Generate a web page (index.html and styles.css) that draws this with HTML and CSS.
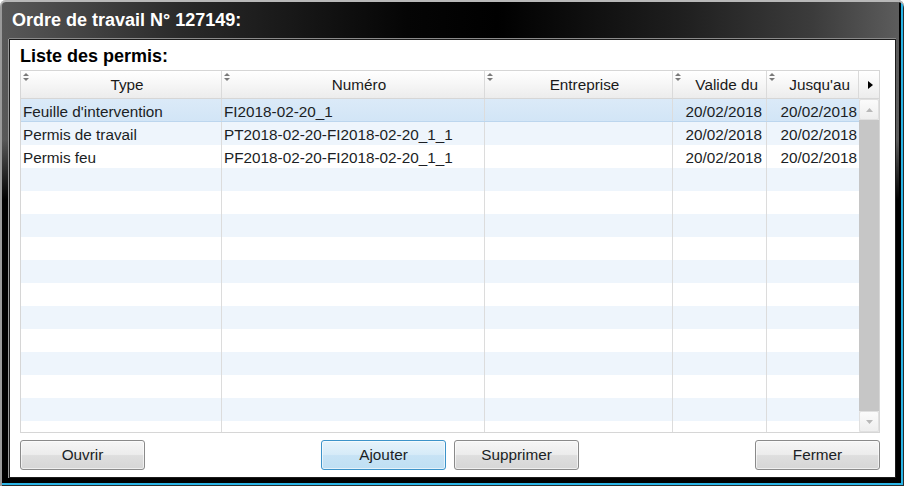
FILE: index.html
```html
<!DOCTYPE html>
<html lang="fr">
<head>
<meta charset="utf-8">
<title>Ordre de travail</title>
<link rel="stylesheet" href="styles.css">
</head>
<body>
<div class="window">
  <div class="titlebar">Ordre de travail N° 127149:</div>
  <div class="panel">
    <div class="heading">Liste des permis:</div>
    <div class="table">
      <div class="thead">
        <div class="th center"><svg class="sort" width="6" height="8" viewBox="0 0 6 8"><polygon points="0,3 3,0 6,3"/><polygon points="0,5 3,8 6,5"/></svg>Type</div>
        <div class="th center"><svg class="sort" width="6" height="8" viewBox="0 0 6 8"><polygon points="0,3 3,0 6,3"/><polygon points="0,5 3,8 6,5"/></svg>Numéro</div>
        <div class="th center"><svg class="sort" width="6" height="8" viewBox="0 0 6 8"><polygon points="0,3 3,0 6,3"/><polygon points="0,5 3,8 6,5"/></svg>Entreprise</div>
        <div class="th right"><svg class="sort" width="6" height="8" viewBox="0 0 6 8"><polygon points="0,3 3,0 6,3"/><polygon points="0,5 3,8 6,5"/></svg>Valide du</div>
        <div class="th right"><svg class="sort" width="6" height="8" viewBox="0 0 6 8"><polygon points="0,3 3,0 6,3"/><polygon points="0,5 3,8 6,5"/></svg>Jusqu'au</div>
        <div class="th chooser"><svg width="5" height="8" viewBox="0 0 5 8"><polygon points="0,0 5,4 0,8" fill="#000"/></svg></div>
      </div>
      <div class="tbody">
        <div class="rows">
          <div class="row selected"><div class="td">Feuille d'intervention</div><div class="td">FI2018-02-20_1</div><div class="td"></div><div class="td num">20/02/2018</div><div class="td num last">20/02/2018</div></div>
          <div class="row alt"><div class="td">Permis de travail</div><div class="td">PT2018-02-20-FI2018-02-20_1_1</div><div class="td"></div><div class="td num">20/02/2018</div><div class="td num last">20/02/2018</div></div>
          <div class="row"><div class="td">Permis feu</div><div class="td">PF2018-02-20-FI2018-02-20_1_1</div><div class="td"></div><div class="td num">20/02/2018</div><div class="td num last">20/02/2018</div></div>
          <div class="row alt"><div class="td"></div><div class="td"></div><div class="td"></div><div class="td"></div><div class="td last"></div></div>
          <div class="row"><div class="td"></div><div class="td"></div><div class="td"></div><div class="td"></div><div class="td last"></div></div>
          <div class="row alt"><div class="td"></div><div class="td"></div><div class="td"></div><div class="td"></div><div class="td last"></div></div>
          <div class="row"><div class="td"></div><div class="td"></div><div class="td"></div><div class="td"></div><div class="td last"></div></div>
          <div class="row alt"><div class="td"></div><div class="td"></div><div class="td"></div><div class="td"></div><div class="td last"></div></div>
          <div class="row"><div class="td"></div><div class="td"></div><div class="td"></div><div class="td"></div><div class="td last"></div></div>
          <div class="row alt"><div class="td"></div><div class="td"></div><div class="td"></div><div class="td"></div><div class="td last"></div></div>
          <div class="row"><div class="td"></div><div class="td"></div><div class="td"></div><div class="td"></div><div class="td last"></div></div>
          <div class="row alt"><div class="td"></div><div class="td"></div><div class="td"></div><div class="td"></div><div class="td last"></div></div>
          <div class="row"><div class="td"></div><div class="td"></div><div class="td"></div><div class="td"></div><div class="td last"></div></div>
          <div class="row alt"><div class="td"></div><div class="td"></div><div class="td"></div><div class="td"></div><div class="td last"></div></div>
          <div class="row"><div class="td"></div><div class="td"></div><div class="td"></div><div class="td"></div><div class="td last"></div></div>
        </div>
        <div class="scrollbar">
          <div class="sbtn"><svg width="7" height="4" viewBox="0 0 7 4"><polygon points="0,4 3.5,0 7,4" fill="#b8b8b8"/></svg></div>
          <div class="thumb"></div>
          <div class="sbtn"><svg width="7" height="4" viewBox="0 0 7 4"><polygon points="0,0 3.5,4 7,0" fill="#b8b8b8"/></svg></div>
        </div>
      </div>
    </div>
    <div class="buttons">
      <div class="left"><button class="btn">Ouvrir</button></div>
      <div class="mid"><button class="btn focus">Ajouter</button><button class="btn">Supprimer</button></div>
      <div class="right"><button class="btn">Fermer</button></div>
    </div>
  </div>
</div>
</body>
</html>
```

FILE: styles.css
```css
html, body {
  margin: 0;
  padding: 0;
  background: #ffffff;
}

body {
  font-family: "Liberation Sans", Arial, sans-serif;
}

.window {
  width: 904px;
  height: 486px;
  box-sizing: border-box;
  display: flex;
  flex-direction: column;
  padding: 0 8px 8px 9px;
  border-radius: 6px 6px 0 0;
  background:
    linear-gradient(to bottom, rgba(0,0,0,0) 0, rgba(0,0,0,0) 140px, #000 200px, #000 100%),
    linear-gradient(to right, #595959 0, #2a2a2a 20%, #050505 45%, #000 55%, #1e1e1e 75%, #3c3c3c 90%, #5e5e5e 100%);
  box-shadow:
    inset 0 2px 0 #b8b8b8,
    inset 2px 0 0 #9a9a9a,
    inset -1px -1px 0 #2b2b2b,
    inset -3px -3px 0 #2ab4e6,
    inset -5px -5px 0 #000;
}

.titlebar {
  height: 39px;
  box-sizing: border-box;
  padding: 10px 0 0 3px;
  color: #ffffff;
  font-weight: bold;
  font-size: 18px;
  line-height: 21px;
  flex: none;
}

.panel {
  flex: 1;
  background: #ffffff;
  border: 1px solid #1c1c1c;
  box-shadow: 0 -1px 0 #8a8a8a, -1px 0 0 #9a9a9a;
  padding: 6px 15px 7px 10px;
  display: flex;
  flex-direction: column;
}

.heading {
  font-size: 18px;
  font-weight: bold;
  line-height: 21px;
  color: #000;
  margin-bottom: 3px;
}

.table {
  width: 860px;
  height: 363px;
  box-sizing: border-box;
  border: 1px solid #d6d6d6;
  display: flex;
  flex-direction: column;
  color: #1b1e24;
  font-size: 15.3px;
}

.thead {
  display: grid;
  grid-template-columns: 201px 263px 188px 94px 92px 20px;
  height: 28px;
  box-sizing: border-box;
  border-bottom: 1px solid #d6d6d6;
  background: linear-gradient(to bottom, #ffffff 0%, #f7f7f7 45%, #ececec 100%);
  flex: none;
}

.th {
  position: relative;
  display: flex;
  align-items: center;
  border-right: 1px solid #dadada;
  line-height: 27px;
  color: #1a1a1a;
}

.th.center {
  justify-content: center;
  padding-left: 12px;
}

.th.right {
  justify-content: flex-end;
  padding-right: 8px;
}

.th.chooser {
  border-right: none;
  justify-content: center;
  padding-left: 2px;
}

.sort {
  position: absolute;
  left: 2px;
  top: 2px;
  fill: #7a7a7a;
}

.tbody {
  flex: 1;
  display: flex;
  overflow: hidden;
}

.rows {
  width: 838px;
  overflow: hidden;
}

.row {
  display: grid;
  grid-template-columns: 201px 263px 188px 94px 92px;
  height: 23px;
  box-sizing: border-box;
  padding-top: 2px;
  line-height: 21px;
}

.row.alt {
  background: #eef5fc;
}

.row.selected {
  background: linear-gradient(to bottom, #dbeaf8 0%, #d2e5f6 100%);
  border-bottom: 1px solid #bcd6ee;
}

.td {
  border-right: 1px solid #dcdcdc;
  margin-top: -2px;
  padding-top: 2px;
  padding-left: 2px;
  white-space: nowrap;
  overflow: hidden;
}

.td.num {
  text-align: right;
  padding-left: 0;
  padding-right: 4px;
}

.td.last {
  border-right: none;
  padding-right: 2px;
}

.scrollbar {
  width: 20px;
  display: flex;
  flex-direction: column;
  background: #e8e8e8;
}

.sbtn {
  height: 21px;
  box-sizing: border-box;
  border: 1px solid #e0e0e0;
  border-radius: 2px;
  background: linear-gradient(to bottom, #fbfbfb, #eeeeee);
  display: flex;
  align-items: center;
  justify-content: center;
  flex: none;
}

.thumb {
  flex: 1;
  background: #c6c6c6;
}

.buttons {
  margin-top: 7px;
  display: grid;
  grid-template-columns: 1fr auto 1fr;
  align-items: center;
}

.mid {
  display: flex;
  gap: 8px;
}

.right {
  display: flex;
  justify-content: flex-end;
}

.btn {
  width: 125px;
  height: 30px;
  box-sizing: border-box;
  border: 1px solid #8a8a8a;
  border-radius: 3px;
  background: linear-gradient(to bottom, #f6f6f6 0%, #ececec 48%, #dedede 52%, #d6d6d6 100%);
  font-family: "Liberation Sans", Arial, sans-serif;
  font-size: 15.3px;
  color: #1b1e24;
  padding: 0 0 1px 0;
  box-shadow: inset 0 0 0 1px rgba(255,255,255,0.6);
}

.btn.focus {
  border-color: #3c93c9;
  background: linear-gradient(to bottom, #e6f3fb 0%, #d6ebf8 48%, #c7e3f5 52%, #bfdff3 100%);
}
```
